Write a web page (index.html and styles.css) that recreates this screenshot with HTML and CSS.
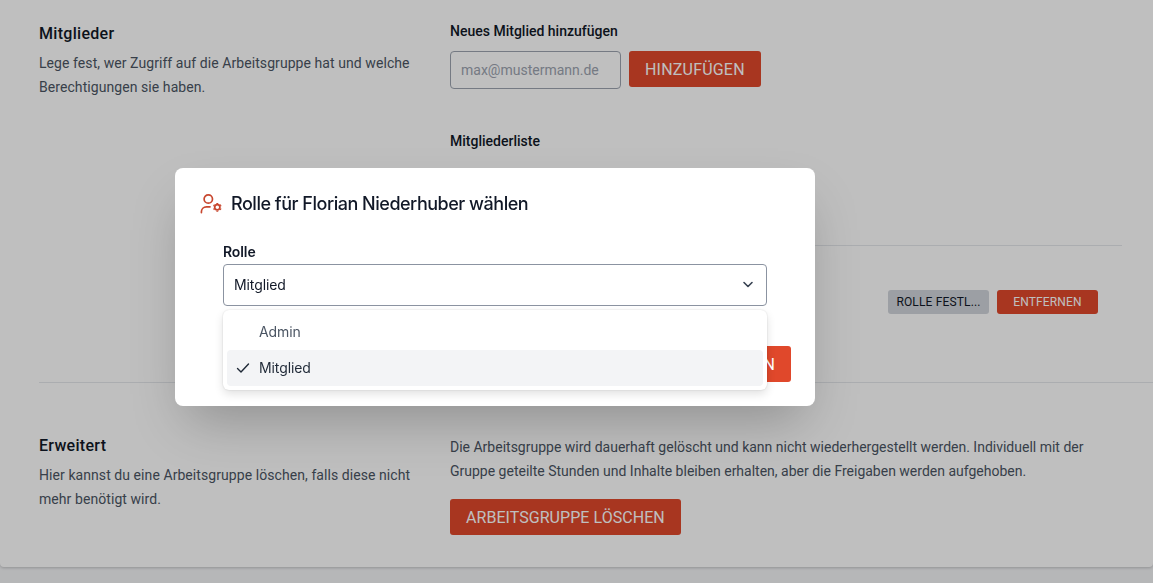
FILE: index.html
```html
<!DOCTYPE html>
<html lang="de">
<head>
    <meta charset="UTF-8">
    <meta name="viewport" content="width=device-width, initial-scale=1.0">
    <title>Arbeitsgruppe</title>
    <link rel="stylesheet" href="styles.css">
</head>
<body>
    <div class="card">
        <section class="section section-members">
            <div class="intro">
                <h2>Mitglieder</h2>
                <p>Lege fest, wer Zugriff auf die Arbeitsgruppe hat und welche Berechtigungen sie haben.</p>
            </div>
            <div class="content">
                <h3>Neues Mitglied hinzufügen</h3>
                <div class="add-row">
                    <input class="email-input" type="text" placeholder="max@mustermann.de">
                    <button class="btn btn-red" type="button">Hinzufügen</button>
                </div>
                <h3 class="list-title">Mitgliederliste</h3>
                <div class="member-row first"></div>
                <div class="member-row">
                    <button class="btn-small btn-gray" type="button">Rolle festl...</button>
                    <button class="btn-small btn-red" type="button">Entfernen</button>
                </div>
            </div>
        </section>
        <section class="section section-advanced">
            <div class="intro">
                <h2>Erweitert</h2>
                <p>Hier kannst du eine Arbeitsgruppe löschen, falls diese nicht mehr benötigt wird.</p>
            </div>
            <div class="content">
                <p class="notice">Die Arbeitsgruppe wird dauerhaft gelöscht und kann nicht wiederhergestellt werden. Individuell mit der Gruppe geteilte Stunden und Inhalte bleiben erhalten, aber die Freigaben werden aufgehoben.</p>
                <button class="btn btn-red" type="button">Arbeitsgruppe löschen</button>
            </div>
        </section>
    </div>

    <div class="overlay"></div>

    <div class="modal">
        <div class="modal-title">
            <svg class="modal-icon" width="24" height="24" viewBox="0 0 24 24" fill="none" stroke="#c8472f" stroke-width="1.7" stroke-linecap="round" stroke-linejoin="round">
                <circle cx="9.3" cy="7" r="4.2"/>
                <path d="M2.400 20.600v-.8c0-2.800 2.200-5 5-5h3.600"/>
                <circle cx="18.300" cy="15.300" r="2.600"/>
                <path stroke-width="1.900" stroke-linecap="butt" d="M18.300 10.900v1M18.300 18.700v1M14.500 13.100l.9.500M21.200 17l.9.500M14.500 17.500l.9-.5M21.200 13.600l.9-.5"/>
            </svg>
            <h1>Rolle für Florian Niederhuber wählen</h1>
        </div>
        <div class="field">
            <label>Rolle</label>
            <div class="select">
                <span>Mitglied</span>
                <svg width="20" height="20" viewBox="0 0 20 20" fill="none" stroke="#374151" stroke-width="1.600" stroke-linecap="round" stroke-linejoin="round">
                    <path d="M6 8.500l4 4 4-4"/>
                </svg>
            </div>
        </div>
        <div class="modal-actions">
            <button class="btn-modal" type="button">Speichern</button>
        </div>
        <ul class="options">
            <li class="option option-muted">Admin</li>
            <li class="option option-active">
                <svg class="check" width="16" height="16" viewBox="0 0 16 16" fill="none" stroke="#1f2937" stroke-width="1.400" stroke-linecap="round" stroke-linejoin="round">
                    <path d="M2.500 8.500l3.500 3.500 7.500-8"/>
                </svg>
                Mitglied
            </li>
        </ul>
    </div>
</body>
</html>
```

FILE: styles.css
```css
* {
    box-sizing: border-box;
}
html, body {
    height: 100%;
}
body {
    margin: 0;
    height: 583px;
    overflow: hidden;
    background-color: #f3f4f6;
    font-family: Roboto, "Liberation Sans", sans-serif;
    color: #111827;
}
.card {
    height: 567px;
    background-color: white;
    box-shadow: 0 1px 3px rgba(0, 0, 0, 0.2);
    border-radius: 0 0 4px 4px;
}
.section {
    display: grid;
    grid-template-columns: 380px 1fr;
    column-gap: 31px;
    margin-left: 39px;
}
.section-members {
    height: 383px;
    padding-top: 23px;
    border-bottom: 1px solid #e5e7eb;
}
.section-advanced {
    padding-top: 53px;
}
h2 {
    margin: 0;
    font-size: 16px;
    line-height: 20px;
    font-weight: 500;
    letter-spacing: 0.3px;
}
.section-members h2 {
    margin-top: 1px;
}
.intro p {
    margin: 7px 0 0;
    font-size: 14px;
    line-height: 24px;
    letter-spacing: 0.07px;
    color: #4b5563;
}
.content {
    margin-right: 31px;
}
h3 {
    margin: -2px 0 0;
    font-size: 14px;
    line-height: 20px;
    font-weight: 500;
}
.add-row {
    display: flex;
    gap: 8px;
    margin-top: 10px;
}
.email-input {
    width: 171px;
    height: 38px;
    padding: 0 10px;
    font-family: inherit;
    font-size: 14px;
    border: 1px solid #9ca3af;
    border-radius: 4px;
    background-color: white;
}
.email-input::placeholder {
    color: #9ca3af;
}
.btn {
    height: 36px;
    padding: 0 16px;
    font-family: inherit;
    font-size: 16px;
    text-transform: uppercase;
    border: none;
    border-radius: 3px;
}
.add-row .btn {
    letter-spacing: 0.2px;
}
.btn-red {
    background-color: #e0482b;
    color: white;
}
.list-title {
    margin-top: 42px;
}
.member-row.first {
    height: 95px;
    border-bottom: 1px solid #e5e7eb;
}
.member-row {
    display: flex;
    justify-content: flex-end;
    gap: 8px;
    padding-top: 44px;
    padding-right: 24px;
}
.btn-small {
    width: 101px;
    height: 24px;
    padding: 0;
    font-family: inherit;
    font-size: 12px;
    letter-spacing: 0.15px;
    text-transform: uppercase;
    border: none;
    border-radius: 3px;
}
.btn-gray {
    background-color: #d1d5db;
    color: #111827;
}
.notice {
    margin: -1px 0 0;
    font-size: 14px;
    line-height: 24px;
    color: #4b5563;
}
.section-advanced .btn {
    margin-top: 16px;
    letter-spacing: 0.05px;
}
.overlay {
    position: fixed;
    inset: 0;
    background-color: rgba(0, 0, 0, 0.25);
}
.modal {
    position: absolute;
    left: 175px;
    top: 168px;
    width: 640px;
    height: 238px;
    padding: 24px;
    background-color: white;
    border-radius: 8px;
    box-shadow: 0 25px 50px -12px rgba(0, 0, 0, 0.25);
    font-family: Inter, "Liberation Sans", sans-serif;
}
.modal-title {
    display: flex;
    align-items: center;
    gap: 8px;
}
.modal-icon {
    flex-shrink: 0;
}
h1 {
    margin: 0;
    font-size: 18px;
    line-height: 24px;
    font-weight: 500;
    letter-spacing: -0.48px;
    color: #111827;
}
.field {
    margin: 26px 24px 0;
}
label {
    display: block;
    font-size: 14px;
    line-height: 20px;
    font-weight: 600;
    letter-spacing: -0.1px;
}
.select {
    display: flex;
    align-items: center;
    justify-content: space-between;
    height: 42px;
    margin-top: 2px;
    padding: 0 8px 2px 10px;
    font-size: 14px;
    letter-spacing: -0.1px;
    border: 1px solid #8b93a1;
    border-radius: 4px;
}
.modal-actions {
    display: flex;
    justify-content: flex-end;
    margin-top: 40px;
}
.btn-modal {
    height: 36px;
    padding: 0 16px;
    font-family: Roboto, "Liberation Sans", sans-serif;
    font-size: 16px;
    text-transform: uppercase;
    background-color: #e0482b;
    color: white;
    border: none;
    border-radius: 3px;
}
.options {
    position: absolute;
    left: 48px;
    top: 142px;
    width: 544px;
    height: 80px;
    margin: 0;
    padding: 4px;
    list-style: none;
    background-color: white;
    border-radius: 6px;
    box-shadow: 0 4px 10px rgba(0, 0, 0, 0.12), 0 0 2px rgba(0, 0, 0, 0.15);
}
.option {
    position: relative;
    height: 36px;
    padding-left: 32px;
    font-size: 14px;
    line-height: 36px;
    letter-spacing: -0.1px;
    border-radius: 4px;
}
.option-muted {
    color: #4b5563;
}
.option-active {
    background-color: #f3f4f6;
    color: #1f2937;
}
.check {
    position: absolute;
    left: 8px;
    top: 10px;
}
```
